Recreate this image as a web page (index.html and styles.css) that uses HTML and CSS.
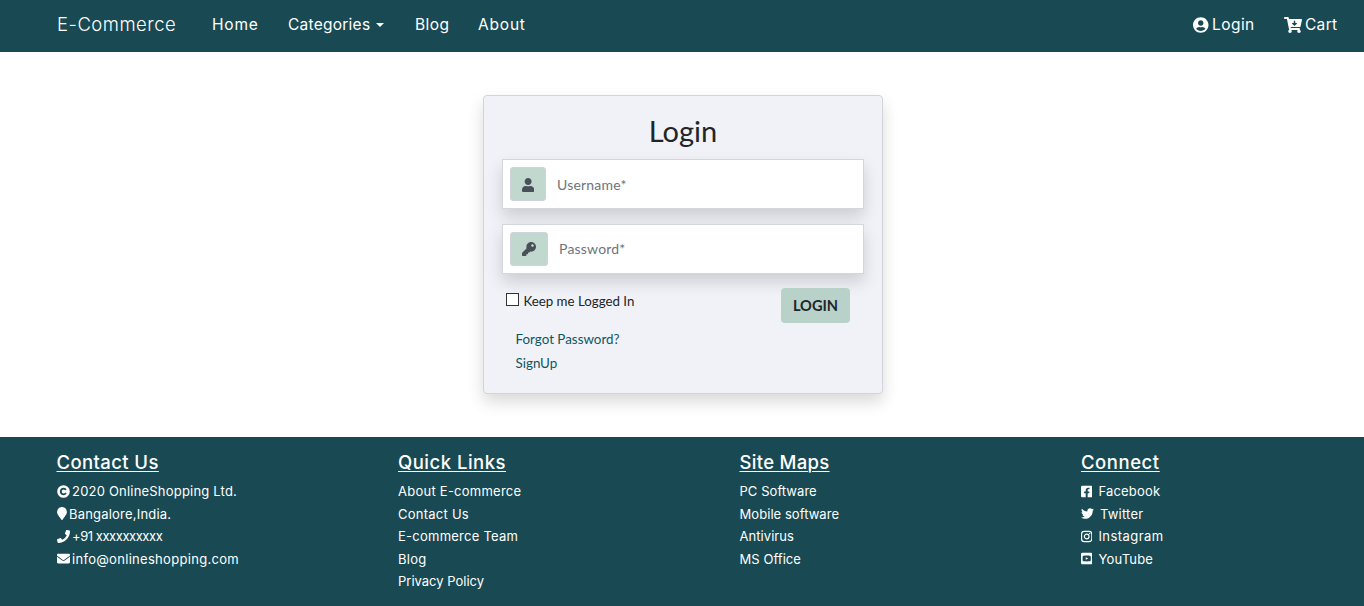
FILE: index.html
```html
<!DOCTYPE html>
<html lang="en">
<head>
<meta charset="utf-8">
<title>Login</title>
<link rel="stylesheet" href="styles.css">
</head>
<body>
<nav class="navbar">
  <a class="brand">E-Commerce</a>
  <a class="nav-link home">Home</a>
  <a class="nav-link categories">Categories<span class="caret"></span></a>
  <a class="nav-link blog">Blog</a>
  <a class="nav-link about">About</a>
  <a class="nav-link login"><svg width="15.5" height="16" viewBox="0 0 496 512"><path d="M248 8C111 8 0 119 0 256s111 248 248 248 248-111 248-248S385 8 248 8zm0 96c48.600 0 88 39.400 88 88s-39.400 88-88 88-88-39.400-88-88 39.400-88 88-88zm0 344c-58.700 0-111.300-26.600-146.500-68.200 18.800-35.400 55.600-59.800 98.500-59.800 2.400 0 4.800.4 7.100 1.100 13 4.200 26.600 6.900 40.900 6.900 14.300 0 28-2.700 40.900-6.900 2.300-.7 4.700-1.100 7.100-1.100 42.900 0 79.700 24.400 98.500 59.800C359.300 421.400 306.700 448 248 448z"/></svg><span>Login</span></a>
  <a class="nav-link cart"><svg width="18" height="16" viewBox="0 0 576 512"><path d="M504.717 320H211.572l6.545 32h268.418c15.401 0 26.816 14.301 23.403 29.319l-5.517 24.276C523.112 414.668 536 433.828 536 456c0 31.202-25.519 56.444-56.824 55.994-29.823-.429-54.350-24.631-55.155-54.447-.440-16.287 6.085-31.049 16.803-41.548H231.176C241.553 426.165 248 440.326 248 456c0 31.813-26.528 57.431-58.670 55.938-28.540-1.325-51.751-24.385-53.251-52.917-1.158-22.034 10.436-41.455 28.051-51.586L93.883 64H24C10.745 64 0 53.255 0 40V24C0 10.745 10.745 0 24 0h102.529c11.401 0 21.228 8.021 23.513 19.190L159.208 64H551.990c15.401 0 26.816 14.301 23.403 29.319l-47.273 208C525.637 312.246 515.923 320 504.717 320zM403.029 192H360v-60c0-6.627-5.373-12-12-12h-24c-6.627 0-12 5.373-12 12v60h-43.029c-10.691 0-16.045 12.926-8.485 20.485l67.029 67.029c4.686 4.686 12.284 4.686 16.971 0l67.029-67.029c7.559-7.559 2.205-20.485-8.486-20.485z"/></svg><span>Cart</span></a>
</nav>
<main class="main">
  <form class="card">
    <h1 class="title">Login</h1>
    <div class="field">
      <span class="badge user"><svg width="12.25" height="14" viewBox="0 0 448 512"><path d="M224 256c70.700 0 128-57.300 128-128S294.700 0 224 0 96 57.300 96 128s57.300 128 128 128zm89.600 32h-16.700c-22.200 10.200-46.900 16-72.900 16s-50.600-5.800-72.900-16h-16.700C60.200 288 0 348.200 0 422.400V464c0 26.500 21.500 48 48 48h352c26.500 0 48-21.500 48-48v-41.600c0-74.200-60.200-134.400-134.400-134.400z"/></svg></span>
      <input class="input username" type="text" placeholder="Username*">
    </div>
    <div class="field">
      <span class="badge key"><svg width="14" height="14" viewBox="0 0 512 512"><path d="M512 176.001C512 273.203 433.202 352 336 352c-11.220 0-22.190-1.062-32.827-3.069l-24.012 27.014A23.999 23.999 0 0 1 261.223 384H224v40c0 13.255-10.745 24-24 24h-40v40c0 13.255-10.745 24-24 24H24c-13.255 0-24-10.745-24-24v-78.059c0-6.365 2.529-12.470 7.029-16.971l161.802-161.802C163.108 213.814 160 195.271 160 176 160 78.798 238.797.001 335.999 0 433.488-.001 512 78.511 512 176.001zM336 128c0 26.510 21.490 48 48 48s48-21.490 48-48-21.490-48-48-48-48 21.490-48 48z"/></svg></span>
      <input class="input" type="text" placeholder="Password*">
    </div>
    <div class="actions">
      <label class="keep"><span class="checkbox"></span>Keep me Logged In</label>
      <button class="submit" type="button">LOGIN</button>
    </div>
    <div class="links"><a>Forgot Password?</a><a>SignUp</a></div>
  </form>
</main>
<footer class="footer">
  <section class="column contact">
    <h2>Contact Us</h2>
    <p><svg width="13" height="13" viewBox="0 0 512 512"><path fill-rule="evenodd" d="M256 8a248 248 0 1 0 0 496a248 248 0 1 0 0-496z M373 347c-26 35-69 56-115 56-83 0-146-65-146-148 0-82 64-145 145-145 44 0 83 17 111 47 4 5 4 11 1 16l-24 33c-4 6-13 7-18 2-17-16-40-28-66-28-45 0-73 33-73 75 0 43 29 77 75 77 26 0 52-13 71-30 6-5 14-4 18 2l22 28c3 5 3 11-1 15z"/></svg><span>2020 OnlineShopping Ltd.</span></p>
    <p><svg width="10" height="13" viewBox="0 0 384 512"><path d="M172.268 501.670C26.970 291.031 0 269.413 0 192 0 85.961 85.961 0 192 0s192 85.961 192 192c0 77.413-26.970 99.031-172.268 309.670-9.535 13.774-29.930 13.773-39.464 0z"/></svg><span>Bangalore,India.</span></p>
    <p><svg width="13" height="13" viewBox="0 0 512 512"><path d="M493.400 24.600l-104-24c-11.300-2.600-22.900 3.300-27.500 13.900l-48 112c-4.200 9.800-1.400 21.300 6.900 28l60.600 49.600c-36 76.700-98.900 140.500-177.200 177.200l-49.600-60.600c-6.800-8.300-18.200-11.100-28-6.900l-112 48C3.900 366.500-2 378.100.6 389.400l24 104C27.100 504.200 36.700 512 48 512c256.100 0 464-207.500 464-464 0-11.200-7.700-20.900-18.600-23.400z"/></svg><span class="phone">+91 xxxxxxxxxx</span></p>
    <p class="email"><svg width="13" height="13" viewBox="0 0 512 512"><path d="M502.300 190.800c3.900-3.100 9.700-.2 9.700 4.700V400c0 26.500-21.500 48-48 48H48c-26.500 0-48-21.500-48-48V195.600c0-5 5.700-7.800 9.700-4.700 22.400 17.400 52.100 39.500 154.100 113.600 21.100 15.400 56.700 47.800 92.200 47.600 35.700.3 72-32.800 92.300-47.600 102-74.100 131.600-96.300 154-113.700zM256 320c23.200.4 56.600-29.200 73.400-41.400 132.700-96.300 142.800-104.700 173.400-128.700 5.800-4.500 9.200-11.500 9.200-18.900v-19c0-26.500-21.500-48-48-48H48c-26.500 0-48 21.500-48 48v19c0 7.400 3.400 14.300 9.200 18.900 30.600 23.900 40.700 32.400 173.400 128.700 16.800 12.200 50.200 41.800 73.400 41.400z"/></svg><span>info@onlineshopping.com</span></p>
  </section>
  <section class="column quick">
    <h2>Quick Links</h2>
    <p>About E-commerce</p><p>Contact Us</p><p>E-commerce Team</p><p>Blog</p><p class="policy">Privacy Policy</p>
  </section>
  <section class="column maps">
    <h2>Site Maps</h2>
    <p>PC Software</p><p>Mobile software</p><p>Antivirus</p><p>MS Office</p>
  </section>
  <section class="column connect">
    <h2>Connect</h2>
    <p><svg width="11.4" height="13" viewBox="0 0 448 512"><path d="M400 32H48A48 48 0 0 0 0 80v352a48 48 0 0 0 48 48h137.250V327.690h-63V256h63v-54.640c0-62.150 37-96.480 93.670-96.480 27.140 0 55.520 4.840 55.520 4.840v61h-31.270c-30.810 0-40.420 19.120-40.420 38.730V256h68.780l-11 71.690h-57.780V480H400a48 48 0 0 0 48-48V80a48 48 0 0 0-48-48z"/></svg><span>Facebook</span></p>
    <p><svg width="13" height="13" viewBox="0 0 512 512"><path d="M459.370 151.716c.325 4.548.325 9.097.325 13.645 0 138.720-105.583 298.558-298.558 298.558-59.452 0-114.680-17.219-161.137-47.106 8.447.974 16.568 1.299 25.340 1.299 49.055 0 94.213-16.568 130.274-44.832-46.132-.975-84.792-31.188-98.112-72.772 6.498.974 12.995 1.624 19.818 1.624 9.421 0 18.843-1.300 27.614-3.573-48.081-9.747-84.143-51.980-84.143-102.985v-1.299c13.969 7.797 30.214 12.670 47.431 13.319-28.264-18.843-46.781-51.005-46.781-87.391 0-19.492 5.197-37.360 14.294-52.954 51.655 63.675 129.300 105.258 216.365 109.807-1.624-7.797-2.599-15.918-2.599-24.040 0-57.828 46.782-104.934 104.934-104.934 30.213 0 57.502 12.670 76.670 33.137 23.715-4.548 46.456-13.320 66.599-25.340-7.798 24.366-24.366 44.833-46.132 57.827 21.117-2.273 41.584-8.122 60.426-16.243-14.292 20.791-32.161 39.308-52.628 54.253z"/></svg><span>Twitter</span></p>
    <p class="instagram"><svg width="11.4" height="13" viewBox="0 0 448 512"><g fill="none" stroke="currentColor" stroke-width="46"><rect x="23" y="55" width="402" height="402" rx="105"/><circle cx="224" cy="256" r="92"/></g><circle cx="343" cy="137" r="27"/></svg><span>Instagram</span></p>
    <p><svg width="11.4" height="13" viewBox="0 0 448 512"><path fill-rule="evenodd" d="M48 32h352a48 48 0 0 1 48 48v352a48 48 0 0 1-48 48H48a48 48 0 0 1-48-48V80a48 48 0 0 1 48-48z M104 146c-24 3-35 14-38 36-6 50-6 98 0 148 3 22 14 33 38 36 80 6 160 6 240 0 24-3 35-14 38-36 6-50 6-98 0-148-3-22-14-33-38-36-80-6-160-6-240 0z M187 202l95 54-95 54z"/></svg><span>YouTube</span></p>
  </section>
</footer>
</body>
</html>
```
FILE: styles.css
```css
* { box-sizing: border-box; }
body { margin: 0; height: 606px; overflow: hidden; background: #fff; font-family: Lato, sans-serif; display: flex; flex-direction: column; }
svg { fill: currentColor; flex: none; display: block; }
.navbar { height: 52px; flex: none; background: #194a53; color: #fff; display: flex; align-items: center; padding: 0 27px 3px 57px; font: 400 15.5px/24px Inter, sans-serif; white-space: nowrap; }
.brand { width: 155px; padding-bottom: 1px; font-size: 18.5px; font-weight: 350; letter-spacing: .5px; }
.nav-link { display: flex; align-items: center; font-size: 15.5px; letter-spacing: .25px; }
.home { width: 76px; letter-spacing: .8px; }
.categories { width: 127px; }
.blog { width: 63px; letter-spacing: .4px; }
.about { letter-spacing: .8px; }
.caret { margin-left: 6px; border: 4.5px solid transparent; border-top-color: #fff; border-bottom: 0; }
.login { margin-left: auto; width: 91px; gap: 3.5px; letter-spacing: .45px; }
.cart { gap: 3px; width: 53px; letter-spacing: .3px; }
.main { height: 385px; flex: none; padding: 43px 0 0 483px; }
.card { width: 400px; height: 299px; background: #f0f2f8; border: 1px solid #d1d4d8; border-radius: 4px; box-shadow: 0 8px 16px rgba(0,0,0,.15); padding: 16px 18px 0; }
.title { margin: 0 0 10px; font-size: 29px; line-height: 37px; font-weight: 400; color: #212529; text-align: center; }
.field { height: 50px; background: #fff; border: 1px solid #d3d6dc; box-shadow: 0 8px 16px rgba(0,0,0,.15); margin-bottom: 15px; padding: 0 7px; display: flex; align-items: center; }
.badge { height: 34px; width: 36px; background: #c1d8ce; border: 1px solid #ced4da; border-radius: 3px; color: #495057; display: flex; align-items: center; justify-content: center; }
.badge.user { padding-top: 1px; }
.badge.key { width: 38px; }
.input { border: 0; outline: 0; padding: 0 0 0 11px; font: 400 14px/20px Lato, sans-serif; letter-spacing: .2px; flex: 1; background: transparent; }
.input.username { padding-top: 1px; }
.input::placeholder { color: #6c757d; opacity: 1; }
.actions { display: flex; justify-content: space-between; align-items: flex-start; padding: 0 14px 0 4px; height: 38px; margin-top: -1px; }
.keep { display: flex; align-items: center; font-size: 13.3px; line-height: 26px; color: #212529; }
.checkbox { width: 13px; height: 13px; border: 1px solid #333; background: #fff; margin: -3px 4.4px 0 0; }
.submit { width: 69px; height: 35px; border: 0; border-radius: 4px; background: #b9d2c9; color: #212529; font: 700 14.6px/20px Lato, sans-serif; padding: 0; }
.links { padding-left: 13.5px; display: flex; flex-direction: column; color: #10565e; font-size: 13.4px; line-height: 24px; margin-top: 1px; }
.footer { flex: 1; background: #194a53; color: #fff; display: grid; grid-template-columns: repeat(4, 341.5px); padding: 13px 0 0 56.5px; font-family: Inter, sans-serif; }
.column h2 { margin: 0 0 6px; font-size: 18.5px; line-height: 24px; font-weight: 500; letter-spacing: .4px; text-decoration: underline; text-decoration-thickness: 1px; text-underline-offset: 2px; }
.column p { margin: 0; font-size: 13px; line-height: 22.5px; letter-spacing: .2px; display: flex; align-items: center; white-space: nowrap; }
.quick h2 { letter-spacing: .5px; }
.quick p { letter-spacing: .25px; }
.quick .policy { letter-spacing: 0; }
.contact p { gap: 2.5px; }
.contact .phone { letter-spacing: -.45px; }
.contact .email { letter-spacing: .3px; }
.maps p { letter-spacing: .06px; }
.maps h2 { letter-spacing: .3px; }
.connect p { gap: 6px; }
.connect h2 { letter-spacing: .55px; }
.connect .instagram { letter-spacing: .45px; }
```
